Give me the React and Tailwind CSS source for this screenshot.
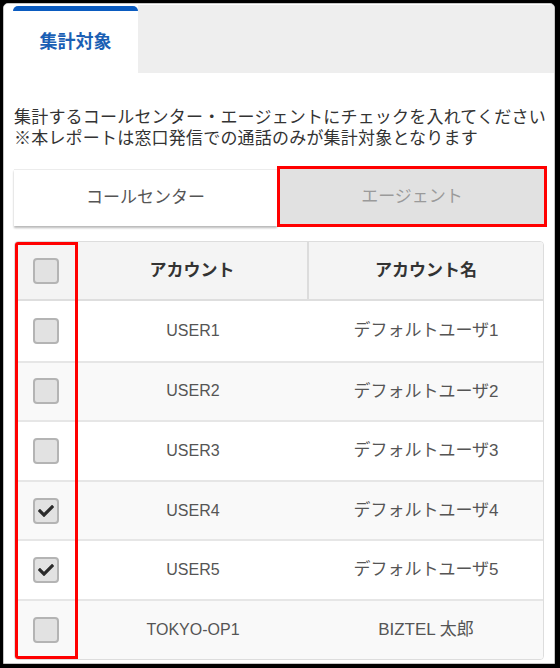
import React from "react";
import { FaCheck } from "react-icons/fa";

const rows = [
  { id: "USER1", name: "デフォルトユーザ1", checked: false },
  { id: "USER2", name: "デフォルトユーザ2", checked: false },
  { id: "USER3", name: "デフォルトユーザ3", checked: false },
  { id: "USER4", name: "デフォルトユーザ4", checked: true },
  { id: "USER5", name: "デフォルトユーザ5", checked: true },
  { id: "TOKYO-OP1", name: "BIZTEL 太郎", checked: false },
];

function Checkbox({ checked }) {
  return (
    <div className="w-[26px] h-[26px] rounded-[4px] border-2 border-[#b4b4b4] bg-[#e2e2e2] flex items-center justify-center">
      {checked && <FaCheck className="text-[#2b2b2b]" size={16} />}
    </div>
  );
}

export default function App() {
  return (
    <div
      className="w-[560px] h-[668px] bg-black pl-[3px] pt-[3px] pr-[5px] pb-[4px]"
      style={{ fontFamily: '"Liberation Sans", "Noto Sans CJK JP", sans-serif' }}
    >
      <div className="h-full bg-white border border-[#c6c6c6] rounded-t-[5px] flex flex-col overflow-hidden">
        {/* tab bar */}
        <div className="flex h-[69px] shrink-0">
          <div className="w-[9px] bg-white" />
          <div className="w-[125px] bg-white border-t-[5px] border-[#0a5bc0] rounded-t-[5px] mt-[2px] flex items-center justify-center">
            <span className="text-[18px] font-bold text-[#1b5fb4] leading-none">集計対象</span>
          </div>
          <div className="flex-1 bg-[#eeeeee] mt-[1px]" />
        </div>

        <div className="px-[10px] flex flex-col">
          <div className="mt-[34px] text-[17px] leading-[21px] text-[#333333] whitespace-nowrap tracking-[0.2px]">
            <div>集計するコールセンター・エージェントにチェックを入れてください</div>
            <div>※本レポートは窓口発信での通話のみが集計対象となります</div>
          </div>

          {/* toggle buttons */}
          <div className="mt-[20px] grid grid-cols-[263px_1fr] gap-[3px] h-[57px]">
            <div className="bg-white border-t border-[#ececec] shadow-[0_2px_2px_rgba(0,0,0,0.28)] flex items-center justify-center text-[17px] text-[#555555]">
              コールセンター
            </div>
            <div className="relative bg-[#e1e1e1] border-b border-[#c9c9c9] flex items-center justify-center text-[17px] text-[#9a9a9a]">
              エージェント
              <div className="absolute -top-[3px] -bottom-[2px] -left-[3px] -right-[3px] border-[3px] border-[#ff0000]" />
            </div>
          </div>

          {/* table */}
          <div className="relative mt-[15px] border border-[#dddddd] rounded-[4px] overflow-hidden">
            <div className="grid grid-cols-[62px_232px_1fr] h-[59px] bg-[#f4f4f4] border-b-2 border-[#dedede] text-[17px] font-bold text-[#333333]">
              <div className="flex items-center justify-center">
                <Checkbox checked={false} />
              </div>
              <div className="flex items-center justify-center border-r-2 border-[#dcdcdc]">アカウント</div>
              <div className="flex items-center justify-center">アカウント名</div>
            </div>
            {rows.map((r, i) => (
              <div
                key={r.id}
                className={`grid grid-cols-[62px_232px_1fr] h-[59.6px] text-[16px] text-[#555555] ${
                  i > 0 ? "border-t-2 border-[#e6e6e6]" : ""
                } ${i % 2 === 1 ? "bg-[#f9f9f9]" : "bg-white"}`}
              >
                <div className="flex items-center justify-center">
                  <Checkbox checked={r.checked} />
                </div>
                <div className="flex items-center justify-center">{r.id}</div>
                <div className="flex items-center justify-center text-[17px]">{r.name}</div>
              </div>
            ))}
            <div className="absolute left-0 top-0 bottom-0 w-[63px] border-[3px] border-[#ff0000]" />
          </div>
        </div>
      </div>
    </div>
  );
}
